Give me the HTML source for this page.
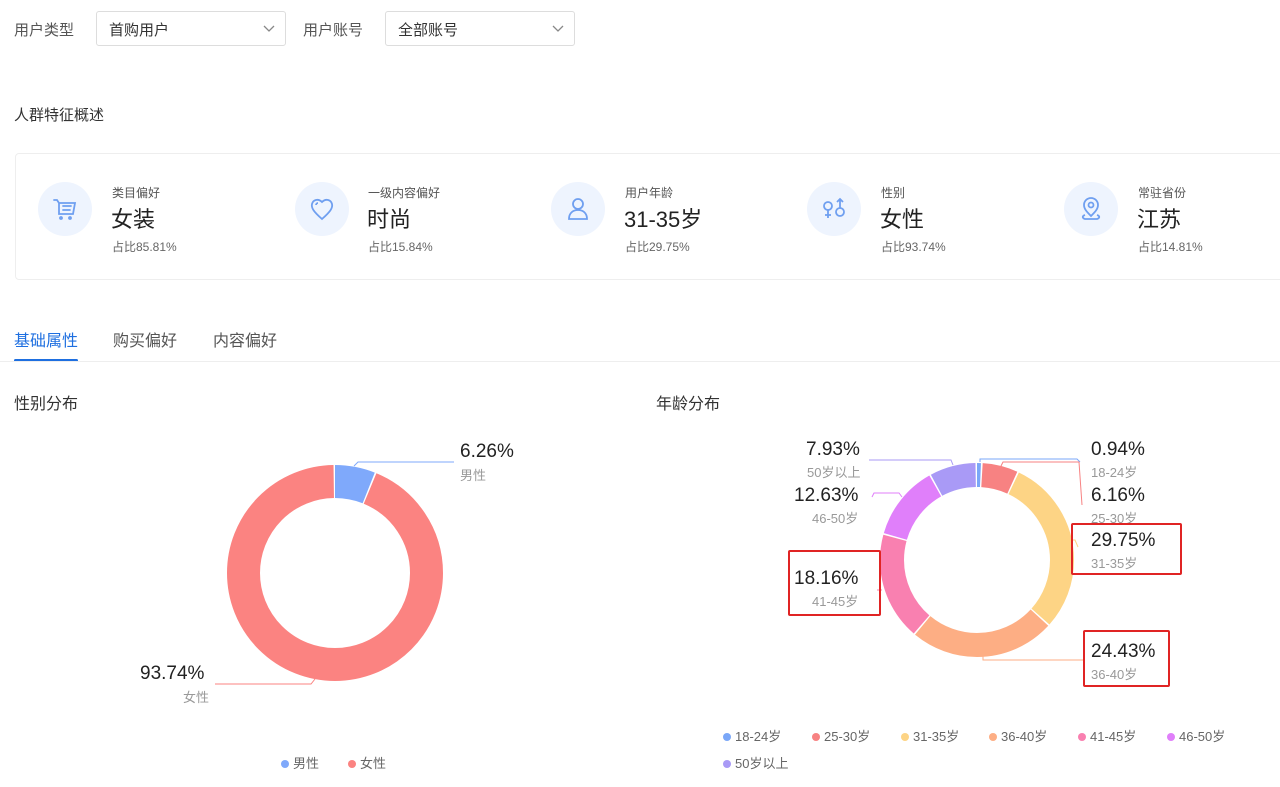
<!DOCTYPE html>
<html><head><meta charset="utf-8"><style>
*{margin:0;padding:0;box-sizing:border-box}
body{width:1280px;height:787px;background:#fff;position:relative;overflow:hidden;font-family:"Liberation Sans","Noto Sans CJK SC",sans-serif;color:#333}
.a{position:absolute;white-space:nowrap}
.lbl{font-size:15px;color:#555}
.sel{position:absolute;height:35px;border:1px solid #ddd;border-radius:3px;font-size:15px;color:#333;padding:7px 12px}
.sel svg{position:absolute;right:10px;top:13px}
.card{position:absolute;left:15px;top:153px;width:1280px;height:127px;border:1px solid #eee;border-radius:4px}
.ic{position:absolute;width:54px;height:54px;border-radius:50%;background:#eef4fe;top:182px}
.ic svg{position:absolute;left:13px;top:13px}
.t1{font-size:12px;color:#555;top:184px}
.t2{font-size:22px;color:#222;top:202px}
.t3{font-size:12px;color:#666;top:238px}
.pct{font-size:19px;color:#222}
.sub{font-size:13px;color:#999}
.box{position:absolute;border:2.5px solid #e02424;border-radius:2px}
.lg{font-size:13px;color:#666}
.dot{display:inline-block;width:8px;height:8px;border-radius:50%;margin-right:4px;vertical-align:0}
</style></head><body>
<div class="a lbl" style="left:14px;top:19px">用户类型</div>
<div class="sel" style="left:96px;top:11px;width:190px">首购用户<svg width="12" height="8"><path d="M1 1l5 5 5-5" fill="none" stroke="#888" stroke-width="1.3"/></svg></div>
<div class="a lbl" style="left:303px;top:19px">用户账号</div>
<div class="sel" style="left:385px;top:11px;width:190px">全部账号<svg width="12" height="8"><path d="M1 1l5 5 5-5" fill="none" stroke="#888" stroke-width="1.3"/></svg></div>
<div class="a lbl" style="left:14px;top:104px;color:#333">人群特征概述</div>
<div class="card"></div>

<div class="ic" style="left:38px"><svg width="28" height="28" viewBox="0 0 28 28" fill="none" stroke="#6f9ff0" stroke-width="1.8" stroke-linecap="round"><path d="M3 5h3l2 3v11h14l2-11H8"/><path d="M12 11h8M12 15h7"/><circle cx="10" cy="23" r="1"/><circle cx="19" cy="23" r="1"/></svg></div>
<div class="a t1" style="left:112px">类目偏好</div><div class="a t2" style="left:111px">女装</div><div class="a t3" style="left:112px">占比85.81%</div>

<div class="ic" style="left:295px"><svg width="28" height="28" viewBox="0 0 28 28" fill="none" stroke="#6f9ff0" stroke-width="1.8"><path d="M14 24C6 17 3 13 4 9c1-4 6-6 10-2 4-4 9-2 10 2 1 4-2 8-10 15z"/><path d="M8 10c0-1 1-2 2-2"/></svg></div>
<div class="a t1" style="left:368px">一级内容偏好</div><div class="a t2" style="left:367px">时尚</div><div class="a t3" style="left:368px">占比15.84%</div>

<div class="ic" style="left:551px"><svg width="28" height="28" viewBox="0 0 28 28" fill="none" stroke="#6f9ff0" stroke-width="1.8"><circle cx="14" cy="9" r="5"/><path d="M5 24c0-6 4-9 9-9s9 3 9 9z"/></svg></div>
<div class="a t1" style="left:625px">用户年龄</div><div class="a t2" style="left:624px">31-35岁</div><div class="a t3" style="left:625px">占比29.75%</div>

<div class="ic" style="left:807px"><svg width="28" height="28" viewBox="0 0 28 28" fill="none" stroke="#6f9ff0" stroke-width="1.8"><circle cx="8" cy="11" r="4"/><path d="M8 15v8M5 20h6"/><circle cx="20" cy="17" r="4"/><path d="M20 13V4M17 7l3-3 3 3"/></svg></div>
<div class="a t1" style="left:881px">性别</div><div class="a t2" style="left:880px">女性</div><div class="a t3" style="left:881px">占比93.74%</div>

<div class="ic" style="left:1064px"><svg width="28" height="28" viewBox="0 0 28 28" fill="none" stroke="#6f9ff0" stroke-width="1.8"><path d="M14 21c-4-4-7-7-7-11a7 7 0 0114 0c0 4-3 7-7 11z"/><circle cx="14" cy="10" r="2.5"/><path d="M8 20c-3 1-3 3 0 4h12c3-1 3-3 0-4"/></svg></div>
<div class="a t1" style="left:1138px">常驻省份</div><div class="a t2" style="left:1137px">江苏</div><div class="a t3" style="left:1138px">占比14.81%</div>

<div class="a" style="left:14px;top:327px;font-size:16px;color:#1e6fe0">基础属性</div>
<div class="a" style="left:113px;top:327px;font-size:16px;color:#555">购买偏好</div>
<div class="a" style="left:213px;top:327px;font-size:16px;color:#555">内容偏好</div>
<div class="a" style="left:14px;top:359px;width:64px;height:3px;background:#1e6fe0;border-radius:2px"></div>
<div class="a" style="left:0;top:361px;width:1280px;height:1px;background:#eee"></div>

<div class="a" style="left:14px;top:390px;font-size:16px;color:#333">性别分布</div>
<div class="a" style="left:656px;top:390px;font-size:16px;color:#333">年龄分布</div>

<svg class="a" style="left:0;top:0" width="1280" height="787">
<g transform="rotate(-90 335 573)" fill="none" stroke-width="33">
<circle cx="335" cy="573" r="91.5" stroke="#7fa9fb" stroke-dasharray="34.5 600"/>
<circle cx="335" cy="573" r="91.5" stroke="#fb8381" stroke-dasharray="537.4 600" stroke-dashoffset="-36"/>
</g>
<g transform="rotate(-90 977 560)" fill="none" stroke-width="24">
<circle cx="977" cy="560" r="85" stroke="#7aa7f8" stroke-dasharray="3.5 600"/>
<circle cx="977" cy="560" r="85" stroke="#f78282" stroke-dasharray="31.4 600" stroke-dashoffset="-5.02"/>
<circle cx="977" cy="560" r="85" stroke="#fdd485" stroke-dasharray="157.4 600" stroke-dashoffset="-37.92"/>
<circle cx="977" cy="560" r="85" stroke="#fdae84" stroke-dasharray="129 600" stroke-dashoffset="-196.8"/>
<circle cx="977" cy="560" r="85" stroke="#f980b0" stroke-dasharray="95.5 600" stroke-dashoffset="-327.3"/>
<circle cx="977" cy="560" r="85" stroke="#e07ffa" stroke-dasharray="65.9 600" stroke-dashoffset="-424.3"/>
<circle cx="977" cy="560" r="85" stroke="#a99af6" stroke-dasharray="40.8 600" stroke-dashoffset="-491.7"/>
</g>
<g fill="none" stroke-width="1">
<path d="M354 466l4-4h96" stroke="#7fa9fb"/>
<path d="M315 679l-4 5H215" stroke="#fb8381"/>
<path d="M980 462v-3h97l3 3" stroke="#7aa7f8"/>
<path d="M1001 466l2-4h76l3 43" stroke="#f78282"/>
<path d="M1078 547l-3-7h-4" stroke="#fdd485"/>
<path d="M983 655v5h100" stroke="#fdae84"/>
<path d="M882 590h-5" stroke="#f980b0"/>
<path d="M902 497l-3-4h-25l-2 4" stroke="#e07ffa"/>
<path d="M953 465l-2-5h-82" stroke="#a99af6"/>
</g>
</svg>

<div class="a pct" style="left:460px;top:441px">6.26%</div><div class="a sub" style="left:460px;top:465px">男性</div>
<div class="a pct" style="left:140px;top:663px">93.74%</div><div class="a sub" style="left:183px;top:687px">女性</div>

<div class="a pct" style="left:806px;top:439px">7.93%</div><div class="a sub" style="left:807px;top:462px">50岁以上</div>
<div class="a pct" style="left:794px;top:485px">12.63%</div><div class="a sub" style="left:812px;top:508px">46-50岁</div>
<div class="a pct" style="left:794px;top:568px">18.16%</div><div class="a sub" style="left:812px;top:591px">41-45岁</div>
<div class="a pct" style="left:1091px;top:439px">0.94%</div><div class="a sub" style="left:1091px;top:462px">18-24岁</div>
<div class="a pct" style="left:1091px;top:485px">6.16%</div><div class="a sub" style="left:1091px;top:508px">25-30岁</div>
<div class="a pct" style="left:1091px;top:530px">29.75%</div><div class="a sub" style="left:1091px;top:553px">31-35岁</div>
<div class="a pct" style="left:1091px;top:641px">24.43%</div><div class="a sub" style="left:1091px;top:664px">36-40岁</div>
<div class="box" style="left:788px;top:550px;width:93px;height:66px"></div>
<div class="box" style="left:1071px;top:523px;width:111px;height:52px"></div>
<div class="box" style="left:1083px;top:630px;width:87px;height:57px"></div>

<div class="a lg" style="left:281px;top:753px"><span class="dot" style="background:#7fa9fb"></span>男性</div>
<div class="a lg" style="left:348px;top:753px"><span class="dot" style="background:#fb8381"></span>女性</div>
<div class="a lg" style="left:723px;top:726px"><span class="dot" style="background:#7aa7f8"></span>18-24岁</div>
<div class="a lg" style="left:812px;top:726px"><span class="dot" style="background:#f78282"></span>25-30岁</div>
<div class="a lg" style="left:901px;top:726px"><span class="dot" style="background:#fdd485"></span>31-35岁</div>
<div class="a lg" style="left:989px;top:726px"><span class="dot" style="background:#fdae84"></span>36-40岁</div>
<div class="a lg" style="left:1078px;top:726px"><span class="dot" style="background:#f980b0"></span>41-45岁</div>
<div class="a lg" style="left:1167px;top:726px"><span class="dot" style="background:#e07ffa"></span>46-50岁</div>
<div class="a lg" style="left:723px;top:753px"><span class="dot" style="background:#a99af6"></span>50岁以上</div>
</body></html>
